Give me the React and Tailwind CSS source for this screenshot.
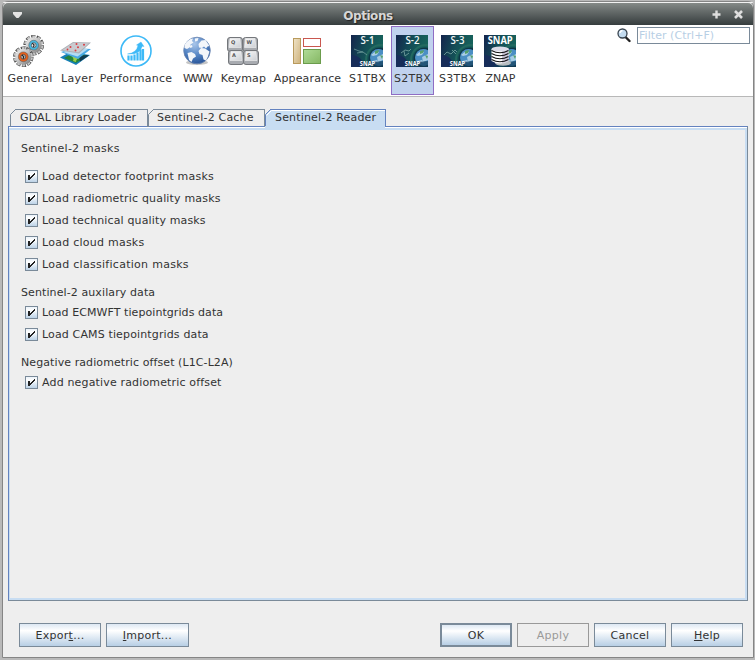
import React from 'react';

function GeneralIcon() {
  const gear = (cx, cy, hub, inner) => (
    <g>
      <circle cx={cx} cy={cy} r="8.6" fill="none" stroke="#4c4c4c" strokeWidth="3.4" strokeDasharray="4 1.4" />
      <circle cx={cx} cy={cy} r="8.5" fill="none" stroke="#c4c4c4" strokeWidth="2.4" strokeDasharray="2.8 2.6" strokeDashoffset="-0.6" />
      <circle cx={cx} cy={cy} r="8" fill="url(#metal)" />
      <circle cx={cx} cy={cy} r="4.900" fill={hub} stroke="#555" strokeWidth="0.5" />
      <circle cx={cx} cy={cy} r="2.4" fill={inner} stroke="#444" strokeWidth="0.7" />
      <path d={`M${cx - 1.4} ${cy - 2}l1.800 1.800-.6 2.200`} stroke="#222" strokeWidth="1.1" fill="none" />
    </g>
  );
  return (
    <svg width="32" height="32" viewBox="0 0 32 32" className="-ml-px">
      <defs>
        <linearGradient id="metal" x1="0" y1="0" x2="1" y2="1">
          <stop offset="0" stopColor="#f0f0f0" />
          <stop offset="0.5" stopColor="#c0c0c0" />
          <stop offset="1" stopColor="#707070" />
        </linearGradient>
      </defs>
      {gear(20.700, 10.2, '#48b5dc', '#e8e8e8')}
      {gear(10.3, 21.800, '#e4601c', '#b8b8b8')}
    </svg>
  );
}

function LayerIcon() {
  return (
    <svg width="32" height="32" viewBox="0 0 32 32" className="-ml-px">
      <path d="M0 22.500l10-5.500 20 3-14 10z" fill="#1680b8" />
      <path d="M4 23l9-5 15 2.600-12 7.400z" fill="#24843c" />
      <path d="M9 19q4 3 7 1t5 3q-5 0-5 4l-3-1q2-3-4-7z" fill="#9bd04a" />
      <path d="M19 21l8-1 2 .5-9 6z" fill="#123c50" />
      <path d="M1 17l12-4 18 1-13 10z" fill="#4aaae4" />
      <path d="M3 17l10-4 15 1-10.500 7.500z" fill="#b4dcf3" />
      <path d="M0 15.500L13 7l18 .5L19 18.500z" fill="#adb1b6" />
      <path d="M2.500 15L13.500 7.800l15.500.5-10.500 9z" fill="#c9cbd0" />
      <g fill="#dc3d42">
        <circle cx="16.500" cy="9" r="1" /><circle cx="24" cy="9.800" r="1" /><circle cx="10.500" cy="12" r="1" />
        <circle cx="18" cy="12.300" r="1" /><circle cx="7.500" cy="14.500" r="0.900" /><circle cx="15.500" cy="15.500" r="1" />
      </g>
    </svg>
  );
}

function PerformanceIcon() {
  return (
    <svg width="32" height="32" viewBox="0 0 32 32" fill="none" stroke="#3cb9f7">
      <circle cx="16" cy="16" r="15" strokeWidth="1.600" />
      <path d="M8.500 25.500v-5M11.500 25.500v-5M14.500 25.500v-6M17.500 25.500v-8M20.500 25.500v-11M23 25.500V14" strokeWidth="2.200" />
      <path d="M7.500 19q9-1 10.500-8.500l-1.500-.5L21 7l3 4.500-1.800-.3Q20 20 7.500 19z" fill="#3cb9f7" strokeWidth="0.400" />
    </svg>
  );
}

function GlobeIcon() {
  return (
    <svg width="32" height="32" viewBox="0 0 32 32">
      <defs>
        <radialGradient id="sea" cx="0.400" cy="0.250" r="0.800">
          <stop offset="0" stopColor="#a9c6ea" />
          <stop offset="0.550" stopColor="#5585c4" />
          <stop offset="1" stopColor="#234f94" />
        </radialGradient>
      </defs>
      <ellipse cx="16" cy="27.500" rx="11" ry="2.500" fill="#c5c5c5" />
      <circle cx="16" cy="15.500" r="13.300" fill="url(#sea)" stroke="#6884b0" strokeWidth="0.800" />
      <path d="M3.500 10Q7 4 12 3.500l-1 2.500 1.500 1.500-3 2-1 3-2.500 1.500-2.500-1zM6.500 18l4-1 3.500 2 1 2.500-3 2-1.500 3.500-2.500-2zM14 3.500l3.500-.5-1 3-2.500.5zM17.500 9l3-3.500 4-.5 4 6-2 .5-1.500 2-2-2-2 1.500-3-.5zM17.500 16l2.500-3 4 .5 4.500 3-1.500 5-2 4-2.500-1-1-4.500-3-1zM8 11l3-1 .5 2-2 1z" fill="#f3f6fa" />
    </svg>
  );
}

function KeymapIcon() {
  const key = (x, y, w, letter) => (
    <g>
      <rect x={x + 0.5} y={y + 0.5} width={w} height="14" rx="2.500" fill="#a8abb0" stroke="#74777b" />
      <path d={`M${x + 3} ${y + 1.500}h${w - 5}l1 9h${-(w - 3)}z`} fill="url(#cap)" stroke="#f2f2f2" strokeWidth="0.600" />
      <text x={x + 4} y={y + 6.500} fontSize="5" fontWeight="700" fill="#555">{letter}</text>
    </g>
  );
  return (
    <svg width="32" height="32" viewBox="0 0 32 32" className="font-['DejaVu_Sans',sans-serif]">
      <defs>
        <linearGradient id="cap" x1="0" y1="0" x2="1" y2="1">
          <stop offset="0" stopColor="#fafafa" /><stop offset="1" stopColor="#cccfd4" />
        </linearGradient>
      </defs>
      {key(0, 2, 15, 'Q')}
      {key(15.5, 2, 14.5, 'W')}
      {key(1, 15, 15, 'A')}
      {key(16, 15, 15, 'S')}
    </svg>
  );
}

function AppearanceIcon() {
  return (
    <svg width="32" height="32" viewBox="0 0 32 32">
      <defs>
        <linearGradient id="sand" x1="0" y1="0" x2="1" y2="1">
          <stop offset="0" stopColor="#f0e4c8" /><stop offset="1" stopColor="#ceb27c" />
        </linearGradient>
        <linearGradient id="grass" x1="0" y1="0" x2="1" y2="1">
          <stop offset="0" stopColor="#b0dc98" /><stop offset="1" stopColor="#85b763" />
        </linearGradient>
      </defs>
      <rect x="2.500" y="3.500" width="7" height="25" fill="url(#sand)" stroke="#b99a5c" />
      <rect x="12.500" y="3.500" width="17" height="8" fill="#fff" stroke="#c9574f" />
      <rect x="12.500" y="14.500" width="17" height="14" fill="url(#grass)" stroke="#6b9c4c" />
    </svg>
  );
}

function ToolboxIcon({ label, id, snap }) {
  return (
    <svg width="32" height="32" viewBox="0 0 32 32" className={`overflow-visible font-['Open_Sans',sans-serif] tracking-normal ${snap ? '' : '-ml-px'}`}>
      <defs>
        <linearGradient id={id} x1="0" y1="0" x2="1" y2="0.300">
          <stop offset="0" stopColor="#14244c" /><stop offset="0.500" stopColor="#134d56" /><stop offset="1" stopColor="#17645c" />
        </linearGradient>
        <clipPath id={`${id}-clip`}><path d="M0 0h32v32H0z" /></clipPath>
      </defs>
      <g clipPath={`url(#${id}-clip)`}>
        <path d="M0 0h32v32H0z" fill={`url(#${id})`} />
        <path d="M0 32V20q9-1 15 12z" fill="#172d59" />
        <circle cx="30" cy="25" r="15" fill="none" stroke="#23695f" strokeWidth="2" />
        <circle cx="29" cy="24" r="11.500" fill="#0d3545" />
        <circle cx="27.500" cy="22.500" r="8.500" fill="#4b8fc4" />
        <path d="M20 20q4-5 8-3l-2 3-4 1zM26 22l6-3v6l-5 2zM22 26l4-1 2 3z" fill="#a8cde4" />
        <path d="M24 16l4-1-1 3-3 1zM29 20l3 1-1 3z" fill="#55a06c" />
        <path d="M17 27q8 0 15-1v6H8z" fill="#123c58" opacity="0.700" />
      </g>
      {snap ? (
        <>
          <ellipse cx="19" cy="28" rx="8" ry="2.800" fill="#b8bdc0" />
          <path d="M7.500 14v12q8.500 5 17 0V14z" fill="#fff" />
          <path d="M18 13h6.500v13q-3 2-6.500 2z" fill="#c9c4d6" />
          <ellipse cx="16" cy="14" rx="8.500" ry="2.500" fill="#dcdbe8" />
          <path d="M7.500 15.500q8.500 4.500 17 0M7.500 18.500q8.500 4.500 17 0M7.500 21.500q8.500 4.500 17 0M7.500 24.500q8.500 4.500 17 0" fill="none" stroke="#111" strokeWidth="1.200" />
          <text x="16.200" y="9" fontSize="10.500" fontWeight="700" textAnchor="middle" fill="#fff" textLength="25" lengthAdjust="spacingAndGlyphs">SNAP</text>
        </>
      ) : (
        <>
          {label === 'S-1' && <path d="M3 14l5 2 4 1 4 3M6 18l6-1" stroke="#6d9c9b" fill="none" strokeWidth="0.800" />}
          {label === 'S-2' && <path d="M5 18l4-3 4 1 2-2M8 16l1 5 4-3" stroke="#7ba7a5" fill="none" strokeWidth="0.800" />}
          {label === 'S-3' && <path d="M3 20l3-3 4 2 4-4 2 2M11 15l4 4" stroke="#7ba7a5" fill="none" strokeWidth="0.800" />}
          <text x="16.500" y="9" fontSize="10.500" fontWeight="600" textAnchor="middle" fill="#f2f7f7" textLength="14" lengthAdjust="spacingAndGlyphs">{label}</text>
          <text x="16.500" y="30.800" fontSize="7" fontWeight="700" textAnchor="middle" fill="#fff" textLength="15.500" lengthAdjust="spacingAndGlyphs">SNAP</text>
        </>
      )}
    </svg>
  );
}

const categories = [
  { name: 'General', cls: 'w-[54px]', icon: <GeneralIcon /> },
  { name: 'Layer', cls: 'w-10', icon: <LayerIcon /> },
  { name: 'Performance', cls: 'w-[78px]', icon: <PerformanceIcon /> },
  { name: 'WWW', cls: 'w-11', text: 'tracking-[-1.5px]', icon: <GlobeIcon /> },
  { name: 'Keymap', cls: 'w-12', text: 'tracking-[0.15px] pl-px', icon: <KeymapIcon /> },
  { name: 'Appearance', cls: 'w-20', text: 'tracking-[0.15px] pl-px', icon: <AppearanceIcon /> },
  { name: 'S1TBX', cls: 'w-[41px]', icon: <ToolboxIcon id="s1" label="S-1" /> },
  { name: 'S2TBX', cls: 'w-[43px] ml-[3px]', selected: true, icon: <ToolboxIcon id="s2" label="S-2" /> },
  { name: 'S3TBX', cls: 'w-[43px] ml-[2px]', icon: <ToolboxIcon id="s3" label="S-3" /> },
  { name: 'ZNAP', cls: 'w-10 ml-px', text: 'tracking-[0px] pl-px', icon: <ToolboxIcon id="znap" snap /> },
];

function TitleBar() {
  return (
    <div className="grid h-[22px] grid-cols-[1fr_auto_1fr] items-center rounded-t-[5px] bg-linear-to-b from-[#858a88] to-[#363d3e] pr-[10px] pl-[10px]">
      <svg width="9" height="7" viewBox="0 0 9 7" className="mt-0.5"><path d="M0 0h9v2L5.500 6h-2L0 2z" fill="#e4e4e4" /></svg>
      <div className="-ml-5 pt-1 text-xs font-bold tracking-[-0.45px] text-[#d6d6d6] [text-shadow:1px_1px_1px_#222]">Options</div>
      <div className="flex items-center justify-end gap-[13px]">
        <svg width="9" height="9" viewBox="0 0 9 9"><path d="M4.500 .5v8M.5 4.500h8" stroke="#dedede" strokeWidth="2.400" /></svg>
        <svg width="9" height="9" viewBox="0 0 9 9"><path d="M1 1l7 7M8 1L1 8" stroke="#dedede" strokeWidth="2.600" /></svg>
      </div>
    </div>
  );
}

function Toolbar() {
  return (
    <div className="flex h-[72px] items-start justify-between border-b border-[#b8b8b8] bg-white pt-px pr-[3px]">
      <div className="flex">
        {categories.map((c) => (
          <div
            key={c.name}
            className={`flex h-[69px] flex-col items-center border pt-2 ${c.cls} ${c.selected ? 'border-[#8f6dc4] bg-[#c1d2ee]' : 'border-transparent'}`}
          >
            <div className="h-8 w-8 shrink-0">{c.icon}</div>
            <div className={`mt-1 leading-4 whitespace-nowrap ${c.text ?? ''}`}>{c.name}</div>
          </div>
        ))}
      </div>
      <div className="flex gap-[6px] pt-px">
        <svg width="14" height="15" viewBox="0 0 14 15" className="mt-px">
          <path d="M8.500 9l4 4" stroke="#222" strokeWidth="2.400" strokeLinecap="round" />
          <circle cx="5.500" cy="5.500" r="4.500" fill="#c4dcf0" stroke="#38434e" strokeWidth="1.300" />
          <path d="M3 5q0-2 2.500-2.500" stroke="#fff" fill="none" strokeWidth="1.300" />
        </svg>
        <div className="h-[17px] w-[113px] border border-[#7a8a99] pl-px leading-4 tracking-[0.05px] text-[#b8cfe5]">Filter (Ctrl+F)</div>
      </div>
    </div>
  );
}

function Tab({ label, width, text, selected }) {
  const stroke = selected ? '#6382bf' : '#7a8a99';
  return (
    <div className={`relative h-[18px] ${width} ${selected ? 'z-10' : ''}`}>
      <svg className={`absolute inset-0 h-full w-full ${selected ? 'overflow-visible' : ''}`}>
        {selected && <path d="M0 20V6L6 0h114v20z" fill="#c8ddf2" />}
        <path d={selected ? 'M.5 17V5.500l5-5' : 'M.5 18V5.500l5-5'} stroke={stroke} fill="none" />
        {selected && <path d="M1.500 6.500l5-5H120" stroke="#fff" fill="none" />}
      </svg>
      <div className={`absolute top-0 right-0 bottom-0 left-[5px] border-t border-r leading-4 whitespace-nowrap ${text} ${selected ? 'border-[#6382bf]' : 'border-[#7a8a99]'}`}>{label}</div>
    </div>
  );
}

function Check({ text = '', children }) {
  return (
    <div className="flex h-[22px] items-center gap-1 pl-1">
      <svg width="13" height="13" viewBox="0 0 13 13">
        <defs>
          <linearGradient id="box" x1="0" y1="0" x2="0" y2="1">
            <stop offset="0" stopColor="#e8f0f8" /><stop offset="0.300" stopColor="#fff" /><stop offset="1" stopColor="#b8cfe5" />
          </linearGradient>
        </defs>
        <rect x="0.500" y="0.500" width="12" height="12" fill="url(#box)" stroke="#7a8a99" />
        <path d="M3 5h2v2h1V6h1V5h1V4h1V3h1v2H9v1H8v1H7v1H6v1H5v1H3z" fill="#222" />
      </svg>
      <span className={`pt-px leading-4 ${text}`}>{children}</span>
    </div>
  );
}

function Button({ width, variant = 'normal', children }) {
  const look = {
    normal: 'border border-[#7a8a99] bg-linear-to-b from-[#dde8f3] via-white via-30% to-[#b8cfe5]',
    primary: 'border-2 border-[#7a8a99] bg-linear-to-b from-[#dde8f3] via-white via-30% to-[#b8cfe5]',
    disabled: 'border border-[#999] text-[#999]',
  }[variant];
  return <button className={`flex h-6 items-center justify-center pt-0.5 ${width} ${look}`}>{children}</button>;
}

export default function App() {
  return (
    <div className="h-[660px] w-[755px] bg-[#b9b9b9] pt-px pr-px pl-[2px] font-['DejaVu_Sans',sans-serif] text-[11px] tracking-[0.25px] text-[#333]">
      <div className="flex h-[657px] flex-col rounded-t-[6px] border border-[#858585] bg-[#eee]">
        <div className="h-px rounded-t bg-[#f2f2f2]" />
        <TitleBar />
        <Toolbar />
        <div className="flex flex-1 flex-col pt-3 pr-[5px] pl-[5px]">
          <div className="z-10 -mb-px flex pl-[2px]">
            <Tab label="GDAL Library Loader" width="w-[138px]" text="pl-[5px] tracking-[0.14px]" />
            <Tab label="Sentinel-2 Cache" width="w-[117px]" text="pl-1 tracking-[0.2px]" />
            <Tab label="Sentinel-2 Reader" width="w-[121px]" text="pl-[5px] tracking-[0.17px]" selected />
          </div>
          <div className="h-[475px] border border-[#6382bf] border-r-[#7a8a99] border-b-[#7a8a99]">
            <div className="h-px bg-white" />
            <div className="h-[472px] border-2 border-l border-[#c8ddf2] pt-[11px] pl-[11px]">
              <div className="h-4 leading-4">Sentinel-2 masks</div>
              <div className="pt-2">
                <Check text="tracking-[0.2px]">Load detector footprint masks</Check>
                <Check text="tracking-[0.18px]">Load radiometric quality masks</Check>
                <Check text="tracking-[0.14px]">Load technical quality masks</Check>
                <Check>Load cloud masks</Check>
                <Check text="tracking-[0.28px]">Load classification masks</Check>
              </div>
              <div className="mt-[10px] h-4 leading-4 tracking-[0.1px]">Sentinel-2 auxilary data</div>
              <div>
                <Check text="tracking-[0.07px]">Load ECMWFT tiepointgrids data</Check>
                <Check text="tracking-[0.14px]">Load CAMS tiepointgrids data</Check>
              </div>
              <div className="mt-[10px] h-4 leading-4 tracking-[0.09px]">Negative radiometric offset (L1C-L2A)</div>
              <div>
                <Check text="tracking-[0.16px]">Add negative radiometric offset</Check>
              </div>
            </div>
          </div>
          <div className="mt-[22px] flex justify-between pr-[5px] pl-[11px]">
            <div className="flex gap-[5px]">
              <Button width="w-[82px]"><span>Expor<u>t</u>...</span></Button>
              <Button width="w-[83px]"><span><u>I</u>mport...</span></Button>
            </div>
            <div className="flex gap-[5px]">
              <Button width="w-[72px]" variant="primary">OK</Button>
              <Button width="w-[72px]" variant="disabled">Apply</Button>
              <Button width="w-[72px]">Cancel</Button>
              <Button width="w-[72px]"><span><u>H</u>elp</span></Button>
            </div>
          </div>
        </div>
      </div>
    </div>
  );
}
